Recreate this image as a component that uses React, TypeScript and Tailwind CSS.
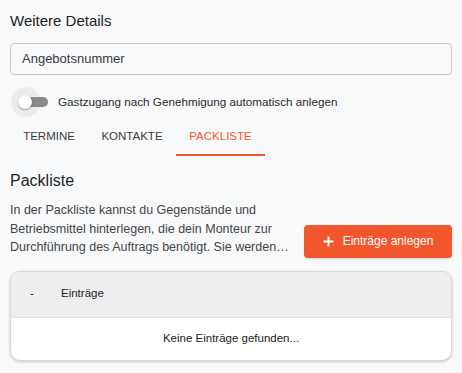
import React from "react";

export default function App() {
  return (
    <div className="w-[462px] h-[373px] bg-[#f8f9fb] px-[10px] font-['Liberation_Sans',Arial,sans-serif] text-[#222] overflow-hidden">
      <div className="pt-[11px] text-[15px] leading-[20px] text-[#222]">Weitere Details</div>

      <div className="mt-[12px] h-[32px] rounded-[4px] border border-[#c8c8c8] flex items-center px-[11px] text-[13px] text-[#3a3a3a]">
        Angebotsnummer
      </div>

      <div className="mt-[12px] h-[30px] flex items-center">
        <div className="relative w-[38px] h-[30px] shrink-0">
          <div className="absolute left-[1px] top-0 w-[30px] h-[30px] rounded-full bg-[#ececec]" />
          <div className="absolute left-[10px] top-[10px] w-[28px] h-[10px] rounded-full bg-[#8a8a8a]" />
          <div className="absolute left-[8px] top-[8px] w-[14px] h-[14px] rounded-full bg-white shadow-[0_1px_2px_rgba(0,0,0,0.35)]" />
        </div>
        <div className="ml-[10px] text-[11.7px] text-[#2a2a2a]">Gastzugang nach Genehmigung automatisch anlegen</div>
      </div>

      <div className="mt-[2px] flex h-[37px]">
        <div className="w-[78px] flex items-center justify-center text-[11.5px] text-[#3c3c3c] pt-[1px] pb-[2px]">TERMINE</div>
        <div className="w-[88px] flex items-center justify-center text-[11.5px] text-[#3c3c3c] pt-[1px] pb-[2px]">KONTAKTE</div>
        <div className="w-[89px] flex items-center justify-center text-[11.5px] text-[#f2562d] pt-[1px] border-b-2 border-[#f2562d]">PACKLISTE</div>
      </div>

      <div className="mt-[14px] text-[16px] leading-[22px] text-[#1e1e1e]">Packliste</div>

      <div className="mt-[9px] flex items-end gap-[14px]">
        <p className="flex-1 text-[12.5px] leading-[18.5px] text-[#444] line-clamp-3">
          In der Packliste kannst du Gegenstände und Betriebsmittel hinterlegen, die dein Monteur zur Durchführung des Auftrags benötigt. Sie werden automatisch in der Auftragsübersicht angezeigt.
        </p>
        <button className="w-[148px] h-[33px] shrink-0 mb-[-1px] rounded-[4px] bg-[#f2562d] text-white text-[12px] flex items-center justify-center gap-[9px] shadow-[0_1px_2px_rgba(0,0,0,0.15)]">
          <svg width="11" height="11" viewBox="0 0 11 11" fill="none">
            <path d="M5.5 0.5v10M0.5 5.5h10" stroke="white" strokeWidth="1.8" />
          </svg>
          <span>Einträge anlegen</span>
        </button>
      </div>

      <div className="mt-[14px] rounded-[10px] border border-[#d8d8d8] bg-white overflow-hidden shadow-[0_1px_3px_rgba(0,0,0,0.2)]">
        <div className="h-[46px] bg-[#efefef] flex items-center border-b border-[#e2e2e2] text-[11.5px] text-[#222]">
          <div className="w-[50px] pl-[19px]">-</div>
          <div>Einträge</div>
        </div>
        <div className="h-[42px] flex items-center justify-center text-[11.5px] text-[#222]">Keine Einträge gefunden...</div>
      </div>
    </div>
  );
}
